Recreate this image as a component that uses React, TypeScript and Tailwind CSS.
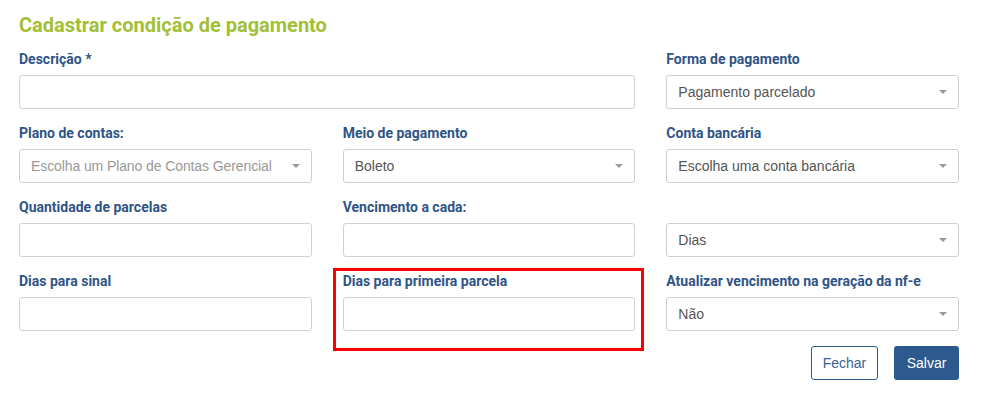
import { ReactNode } from 'react'

const arial = { fontFamily: '"Liberation Sans", Arial, sans-serif' }

function Label({ children }: { children?: ReactNode }) {
  return (
    <div className="mb-[7px] h-[17px] text-[14px] font-bold leading-[17px] text-[#2f5486]">{children}</div>
  )
}

function TextInput() {
  return <input type="text" className="block h-[34px] w-full rounded-[3px] border border-[#d2d2d2] bg-white px-3 outline-none" />
}

function Select({ value, placeholder }: { value: string; placeholder?: boolean }) {
  return (
    <div className="flex h-[34px] w-full items-center justify-between rounded-[3px] border border-[#cfcfcf] bg-white pl-[11px] pr-[11px]" style={arial}>
      <span className={placeholder ? 'text-[14px] tracking-[-0.1px] text-[#999]' : 'text-[14px] text-[#555]'}>{value}</span>
      <span className="h-0 w-0 border-x-[4px] border-t-[4px] border-x-transparent border-t-[#999]" />
    </div>
  )
}

function Field({ label, children, className }: { label?: string; children: ReactNode; className?: string }) {
  return (
    <div className={className}>
      <Label>{label}</Label>
      {children}
    </div>
  )
}

export default function App() {
  return (
    <div className="h-[395px] w-[986px] bg-white pl-[19px] pr-[27px] pt-[13px]" style={{ fontFamily: 'Roboto, "Liberation Sans", sans-serif' }}>
      <h1 className="mb-[14px] text-[20px] font-bold leading-[24px] text-[#a2bf38]">Cadastrar condição de pagamento</h1>

      <div className="grid grid-cols-3 gap-x-[31px] gap-y-[16px]">
        <Field label="Descrição *" className="col-span-2">
          <TextInput />
        </Field>
        <Field label="Forma de pagamento">
          <Select value="Pagamento parcelado" />
        </Field>

        <Field label="Plano de contas:">
          <Select value="Escolha um Plano de Contas Gerencial" placeholder />
        </Field>
        <Field label="Meio de pagamento">
          <Select value="Boleto" />
        </Field>
        <Field label="Conta bancária">
          <Select value="Escolha uma conta bancária" />
        </Field>

        <Field label="Quantidade de parcelas">
          <TextInput />
        </Field>
        <Field label="Vencimento a cada:">
          <TextInput />
        </Field>
        <Field>
          <Select value="Dias" />
        </Field>

        <Field label="Dias para sinal">
          <TextInput />
        </Field>
        <div className="relative">
          <Label>Dias para primeira parcela</Label>
          <TextInput />
          <div className="pointer-events-none absolute -bottom-[20px] -left-[10px] -right-[9px] -top-[5px] border-[3px] border-[#f00]" />
        </div>
        <Field label="Atualizar vencimento na geração da nf-e">
          <Select value="Não" />
        </Field>
      </div>

      <div className="mt-[15px] flex justify-end gap-[16px]" style={arial}>
        <button className="h-[34px] w-[67px] rounded-[3px] border border-[#2c5a8e] bg-white text-[14px] text-[#3d6392]">Fechar</button>
        <button className="h-[34px] w-[65px] rounded-[3px] bg-[#2c5a8e] text-[14px] text-white">Salvar</button>
      </div>
    </div>
  )
}
